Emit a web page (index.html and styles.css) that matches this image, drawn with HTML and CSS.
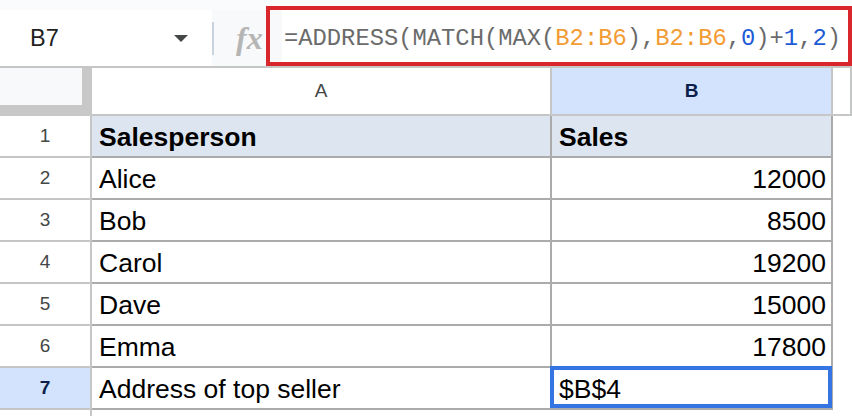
FILE: index.html
```html
<!DOCTYPE html>
<html lang="en">
<head>
    <meta charset="UTF-8">
    <meta name="viewport" content="width=device-width, initial-scale=1.0">
    <title>Top seller</title>
    <link rel="stylesheet" href="styles.css">
</head>
<body>
    <div class="formula-bar">
        <div class="name-box">
            <span class="cell-ref">B7</span>
            <svg class="caret" width="14" height="7" viewBox="0 0 14 7"><path d="M0 0h14L7 7z"/></svg>
        </div>
        <div class="fx-area">
            <span class="divider"></span>
            <span class="fx">fx</span>
        </div>
        <div class="formula-input">=ADDRESS(MATCH(MAX(<span class="rng">B2:B6</span>),<span class="rng">B2:B6</span>,<span class="lit">0</span>)+<span class="lit">1</span>,<span class="lit">2</span>)</div>
        <div class="highlight"></div>
    </div>

    <div class="sheet">
        <!-- column headers -->
        <div class="corner"><div class="corner-box"></div></div>
        <div class="col-head">A</div>
        <div class="col-head selected-head">B</div>
        <div class="col-head"></div>

        <div class="row-head">1</div>
        <div class="cell title-row">Salesperson</div>
        <div class="cell title-row">Sales</div>
        <div class="blank"></div>

        <div class="row-head">2</div>
        <div class="cell">Alice</div>
        <div class="cell num">12000</div>
        <div class="blank"></div>

        <div class="row-head">3</div>
        <div class="cell">Bob</div>
        <div class="cell num">8500</div>
        <div class="blank"></div>

        <div class="row-head">4</div>
        <div class="cell">Carol</div>
        <div class="cell num">19200</div>
        <div class="blank"></div>

        <div class="row-head">5</div>
        <div class="cell">Dave</div>
        <div class="cell num">15000</div>
        <div class="blank"></div>

        <div class="row-head">6</div>
        <div class="cell">Emma</div>
        <div class="cell num">17800</div>
        <div class="blank"></div>

        <div class="row-head selected-head">7</div>
        <div class="cell">Address of top seller</div>
        <div class="cell active">$B$4</div>
        <div class="blank"></div>

        <div class="row-head last"></div>
        <div class="blank"></div>
        <div class="blank"></div>
        <div class="blank"></div>
    </div>
</body>
</html>
```

FILE: styles.css
```css
* {
    box-sizing: border-box;
}

body {
    margin: 0;
    width: 852px;
    height: 416px;
    overflow: hidden;
    background-color: #fff;
    font-family: "Liberation Sans", Arial, sans-serif;
}

/* Barra de fórmulas */
.formula-bar {
    position: relative;
    display: flex;
    height: 68px;
    padding-top: 10px;
    background-color: #f9fbfd;
    border-bottom: 2px solid #c4c7c5;
}

.name-box {
    width: 212px;
    display: flex;
    align-items: center;
    justify-content: space-between;
    padding: 0 24px 0 30px;
    background-color: #fff;
}

.cell-ref {
    font-size: 23.5px;
    color: #1f1f1f;
}

.caret {
    fill: #444746;
}

.fx-area {
    width: 70px;
    display: flex;
    align-items: center;
    background-color: #f8f9fa;
}

.divider {
    width: 2px;
    height: 33px;
    background-color: #c9d3df;
}

.fx {
    margin-left: 22px;
    font-family: "Liberation Serif", serif;
    font-style: italic;
    font-weight: bold;
    font-size: 32px;
    color: #b5b5b5;
}

.formula-input {
    flex-grow: 1;
    display: flex;
    align-items: center;
    padding-left: 2px;
    background-color: #fff;
    font-family: "Liberation Mono", monospace;
    font-size: 23.8px;
    color: #6b6b6b;
    white-space: pre;
}

.rng {
    color: #f29b33;
}

.lit {
    color: #1d5bd6;
}

/* recuadro rojo sobre la fórmula */
.highlight {
    position: absolute;
    left: 266px;
    top: 6px;
    right: 0;
    height: 60px;
    border: 4px solid #d8262c;
}

/* Cuadrícula */
.sheet {
    display: grid;
    grid-template-columns: 92px 460px 281px 1fr;
    grid-template-rows: 48px repeat(7, 42px) 1fr;
    height: 348px;
}

.corner {
    background-color: #c8c8c8;
}

.corner-box {
    width: 82px;
    height: 37px;
    background-color: #f8f9fa;
}

.col-head,
.row-head {
    display: flex;
    align-items: center;
    justify-content: center;
    font-size: 19px;
    color: #444746;
    background-color: #fff;
    border-right: 2px solid #c4c7c5;
    border-bottom: 2px solid #c4c7c5;
}

.row-head.last {
    border-bottom: none;
}

.selected-head {
    background-color: #d3e3fd;
    color: #0b1f4a;
    font-weight: bold;
}

.cell {
    display: flex;
    align-items: center;
    padding: 2px 5px 0 7px;
    font-size: 26.5px;
    color: #000;
    white-space: nowrap;
    border-right: 2px solid #ababab;
    border-bottom: 2px solid #ababab;
}

.cell.num {
    justify-content: flex-end;
}

.title-row {
    background-color: #dde6f0;
    font-weight: bold;
}

.active {
    position: relative;
}

.active::after {
    content: "";
    position: absolute;
    left: -2px;
    top: -2px;
    right: -1px;
    bottom: 0;
    border: 4px solid #3574e3;
}
```
